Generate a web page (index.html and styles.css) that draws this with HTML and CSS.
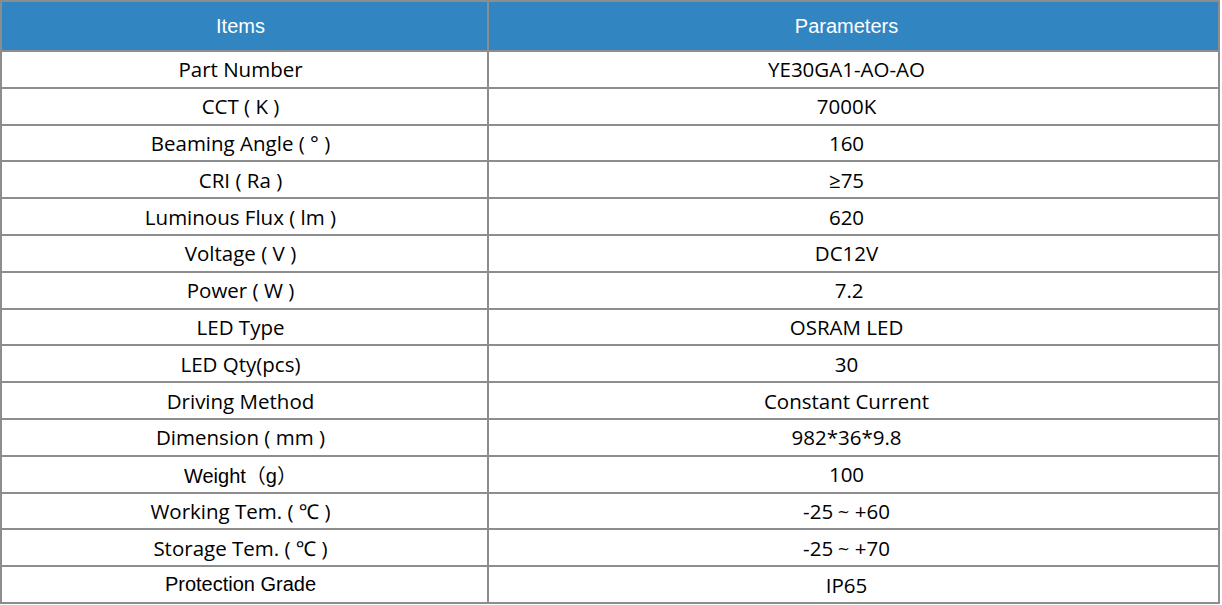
FILE: index.html
```html
<!DOCTYPE html>
<html>
<head>
<meta charset="utf-8">
<link rel="stylesheet" href="styles.css">
</head>
<body>
<div class="spec">
  <div class="cell head left">Items</div>
  <div class="cell head right">Parameters</div>

  <div class="cell left">Part Number</div>
  <div class="cell right">YE30GA1-AO-AO</div>

  <div class="cell left">CCT ( K )</div>
  <div class="cell right">7000K</div>

  <div class="cell left">Beaming Angle ( ° )</div>
  <div class="cell right">160</div>

  <div class="cell left">CRI ( Ra )</div>
  <div class="cell right">≥75</div>

  <div class="cell left">Luminous Flux ( lm )</div>
  <div class="cell right">620</div>

  <div class="cell left">Voltage ( V )</div>
  <div class="cell right">DC12V</div>

  <div class="cell left">Power ( W )</div>
  <div class="cell right">&nbsp;7.2</div>

  <div class="cell left">LED Type</div>
  <div class="cell right">OSRAM LED</div>

  <div class="cell left">LED Qty(pcs)</div>
  <div class="cell right">30</div>

  <div class="cell left">Driving Method</div>
  <div class="cell right">Constant Current</div>

  <div class="cell left">Dimension ( mm )</div>
  <div class="cell right">982*36*9.8</div>

  <div class="cell left arial">Weight（g）</div>
  <div class="cell right">100</div>

  <div class="cell left">Working Tem. ( ℃ )</div>
  <div class="cell right">-25<span class="tilde">~</span>+60</div>

  <div class="cell left">Storage Tem. ( ℃ )</div>
  <div class="cell right">-25<span class="tilde">~</span>+70</div>

  <div class="cell left arial">Protection Grade</div>
  <div class="cell right">IP65</div>
</div>
</body>
</html>
```

FILE: styles.css
```css
html, body {
  margin: 0;
  padding: 0;
  background: #ffffff;
}

.spec {
  width: 1216px;
  padding: 2px;
  display: grid;
  grid-template-columns: 485px 729px;
  grid-template-rows: 48px repeat(15, 34.8px);
  gap: 2px;
  background: #8d8d8d;
}

.cell {
  background: #ffffff;
  color: #000000;
  font-family: "Open Sans", "Noto Sans", sans-serif;
  font-size: 20.5px;
  display: flex;
  align-items: center;
  justify-content: center;
  white-space: pre;
}

.cell.left {
  padding-right: 8px;
}

.cell.right {
  padding-right: 14px;
}

.cell.head {
  background: #3186c1;
  color: #ffffff;
  font-family: "Liberation Sans", Arial, sans-serif;
  font-size: 20px;
}

.cell.arial {
  font-family: "Liberation Sans", Arial, "Noto Sans CJK SC", sans-serif;
  font-size: 20px;
}

.tilde {
  font-family: "DejaVu Sans", sans-serif;
  font-size: 15px;
  padding: 3px 5px 0 4px;
}
```
